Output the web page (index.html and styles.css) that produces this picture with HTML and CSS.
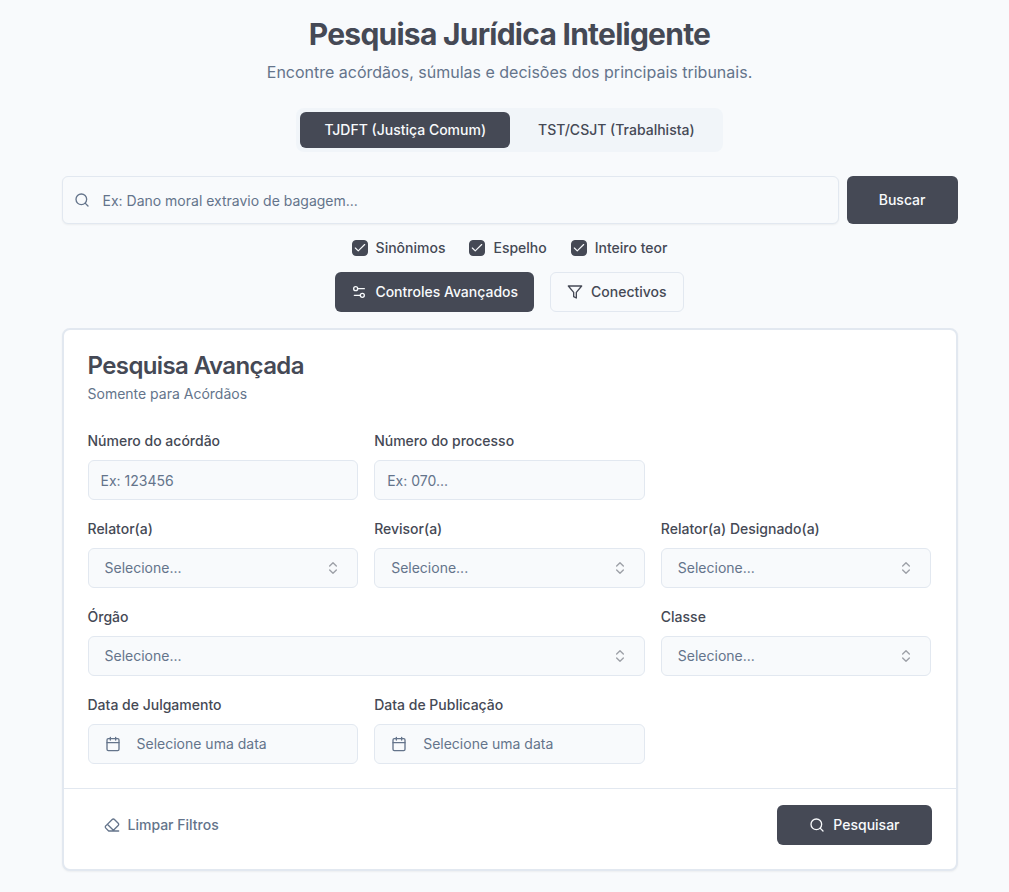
FILE: index.html
```html
<!DOCTYPE html>
<html lang="pt-BR">
<head>
<meta charset="utf-8">
<meta name="viewport" content="width=device-width, initial-scale=1">
<title>Pesquisa Jurídica Inteligente</title>
<link rel="stylesheet" href="styles.css">
</head>
<body>
<svg class="sprite" aria-hidden="true">
  <symbol id="search" viewBox="0 0 24 24"><circle cx="11" cy="11" r="8"/><path d="m21 21-4.3-4.3"/></symbol>
  <symbol id="check" viewBox="0 0 24 24"><path d="M20 6 9 17l-5-5"/></symbol>
  <symbol id="sliders" viewBox="0 0 24 24"><path d="M20 7h-9M14 17H5"/><circle cx="17" cy="17" r="3"/><circle cx="7" cy="7" r="3"/></symbol>
  <symbol id="funnel" viewBox="0 0 24 24"><path d="M22 3H2l8 9.46V19l4 2v-8.54L22 3Z"/></symbol>
  <symbol id="chevrons" viewBox="0 0 24 24"><path d="m7 15 5 5 5-5M7 9l5-5 5 5"/></symbol>
  <symbol id="calendar" viewBox="0 0 24 24"><path d="M8 2v4M16 2v4M3 10h18"/><rect x="3" y="4" width="18" height="18" rx="2"/></symbol>
  <symbol id="eraser" viewBox="0 0 24 24"><path d="m7 21-4.3-4.3c-1-1-1-2.5 0-3.4l9.6-9.6c1-1 2.5-1 3.4 0l5.6 5.6c1 1 1 2.5 0 3.4L13 21M22 21H7M5 11l9 9"/></symbol>
</svg>
<main class="page">
  <header class="hero">
    <h1 class="hero-title">Pesquisa Jurídica Inteligente</h1>
    <p class="hero-text">Encontre acórdãos, súmulas e decisões dos principais tribunais.</p>
  </header>

  <div class="tabs" role="tablist">
    <button class="tab tab-active" type="button" role="tab" aria-selected="true">TJDFT (Justiça Comum)</button>
    <button class="tab" type="button" role="tab" aria-selected="false">TST/CSJT (Trabalhista)</button>
  </div>

  <form class="search">
    <div class="search-row">
      <div class="stack search-field">
        <input class="search-input" type="text" aria-label="Pesquisa" placeholder="Ex: Dano moral extravio de bagagem...">
        <svg class="icon search-icon"><use href="#search"/></svg>
      </div>
      <button class="button button-dark button-large" type="submit">Buscar</button>
    </div>
    <div class="options">
      <label class="option"><span class="stack"><input class="checkbox" type="checkbox" checked><svg class="icon tick"><use href="#check"/></svg></span>Sinônimos</label>
      <label class="option"><span class="stack"><input class="checkbox" type="checkbox" checked><svg class="icon tick"><use href="#check"/></svg></span>Espelho</label>
      <label class="option"><span class="stack"><input class="checkbox" type="checkbox" checked><svg class="icon tick"><use href="#check"/></svg></span>Inteiro teor</label>
    </div>
    <div class="toggles">
      <button class="button button-dark" type="button"><svg class="icon"><use href="#sliders"/></svg>Controles Avançados</button>
      <button class="button button-outline" type="button"><svg class="icon"><use href="#funnel"/></svg>Conectivos</button>
    </div>
  </form>

  <form class="card">
    <div class="card-header">
      <h2 class="card-title">Pesquisa Avançada</h2>
      <p class="card-text">Somente para Acórdãos</p>
    </div>
    <div class="fields">
      <div class="field">
        <label class="label" for="acordao">Número do acórdão</label>
        <input class="control" id="acordao" type="text" placeholder="Ex: 123456">
      </div>
      <div class="field">
        <label class="label" for="processo">Número do processo</label>
        <input class="control" id="processo" type="text" placeholder="Ex: 070...">
      </div>
      <div class="field first">
        <label class="label" for="relator">Relator(a)</label>
        <div class="stack"><select class="control select" id="relator"><option>Selecione...</option></select><svg class="icon chevrons"><use href="#chevrons"/></svg></div>
      </div>
      <div class="field">
        <label class="label" for="revisor">Revisor(a)</label>
        <div class="stack"><select class="control select" id="revisor"><option>Selecione...</option></select><svg class="icon chevrons"><use href="#chevrons"/></svg></div>
      </div>
      <div class="field">
        <label class="label" for="designado">Relator(a) Designado(a)</label>
        <div class="stack"><select class="control select" id="designado"><option>Selecione...</option></select><svg class="icon chevrons"><use href="#chevrons"/></svg></div>
      </div>
      <div class="field wide">
        <label class="label" for="orgao">Órgão</label>
        <div class="stack"><select class="control select" id="orgao"><option>Selecione...</option></select><svg class="icon chevrons"><use href="#chevrons"/></svg></div>
      </div>
      <div class="field">
        <label class="label" for="classe">Classe</label>
        <div class="stack"><select class="control select" id="classe"><option>Selecione...</option></select><svg class="icon chevrons"><use href="#chevrons"/></svg></div>
      </div>
      <div class="field">
        <label class="label" for="julgamento">Data de Julgamento</label>
        <button class="control date" id="julgamento" type="button"><svg class="icon"><use href="#calendar"/></svg>Selecione uma data</button>
      </div>
      <div class="field">
        <label class="label" for="publicacao">Data de Publicação</label>
        <button class="control date" id="publicacao" type="button"><svg class="icon"><use href="#calendar"/></svg>Selecione uma data</button>
      </div>
    </div>
    <div class="card-footer">
      <button class="button button-ghost" type="reset"><svg class="icon"><use href="#eraser"/></svg>Limpar Filtros</button>
      <button class="button button-dark button-wide" type="submit"><svg class="icon"><use href="#search"/></svg>Pesquisar</button>
    </div>
  </form>
</main>
</body>
</html>
```

FILE: styles.css
```css
:root {
  --ink: #454955;
  --muted: #64748b;
  --border: #e2e8f0;
  --surface: #f8fafc;
}

*, *::before, *::after { box-sizing: border-box; }

body {
  margin: 0;
  padding: 16px 0 16px 10px;
  background: var(--surface);
  color: var(--ink);
  font: 14px/20px Inter, "Liberation Sans", sans-serif;
}

h1, h2, p { margin: 0; }

button, input, select {
  margin: 0;
  font: inherit;
  color: inherit;
}

.sprite { display: none; }

.icon {
  width: 16px;
  height: 16px;
  flex: none;
  fill: none;
  stroke: currentColor;
  stroke-width: 2;
  stroke-linecap: round;
  stroke-linejoin: round;
}

/* Children share one cell, so an icon can sit over its control. */
.stack {
  display: grid;
  align-items: center;
}

.stack > * { grid-area: 1 / 1; }
.stack > .icon { pointer-events: none; }

.page {
  max-width: 896px;
  margin: 0 auto;
  display: flex;
  flex-direction: column;
}

.hero { text-align: center; }

.hero-title {
  font-size: 30px;
  line-height: 36px;
  font-weight: 700;
  letter-spacing: -0.025em;
}

.hero-text {
  margin-top: 8px;
  font-size: 16px;
  line-height: 24px;
  color: var(--muted);
}

.tabs {
  align-self: center;
  display: flex;
  gap: 4px;
  margin-top: 24px;
  padding: 4px;
  border-radius: 8px;
  background: #f1f5f9;
}

.tab {
  height: 36px;
  padding: 0 24px;
  border: 0;
  border-radius: 6px;
  background: transparent;
  font-weight: 500;
}

.tab-active {
  background: var(--ink);
  color: var(--surface);
}

.search {
  display: flex;
  flex-direction: column;
  gap: 16px;
  margin-top: 24px;
}

.search-row {
  display: flex;
  gap: 8px;
}

.search-field { flex: 1; }

.search-input {
  width: 100%;
  height: 48px;
  padding: 0 12px 0 40px;
  border: 1px solid var(--border);
  border-radius: 6px;
  background: var(--surface);
  box-shadow: 0 1px 2px rgb(0 0 0 / 5%);
}

::placeholder {
  color: var(--muted);
  opacity: 1;
}

.search-icon {
  margin-left: 12px;
  color: var(--muted);
}

.button {
  height: 40px;
  display: inline-flex;
  align-items: center;
  justify-content: center;
  gap: 8px;
  padding: 0 16px;
  border: 0;
  border-radius: 6px;
  font-weight: 500;
  white-space: nowrap;
}

.button-dark {
  background: var(--ink);
  color: var(--surface);
}

.button-outline {
  border: 1px solid var(--border);
  background: var(--surface);
}

.button-ghost {
  background: transparent;
  color: var(--muted);
}

.button-large {
  height: 48px;
  padding: 0 32px;
}

.button-wide { padding: 0 32px; }

.options {
  display: flex;
  justify-content: center;
  gap: 24px;
}

.option {
  display: flex;
  align-items: center;
  gap: 8px;
  line-height: 16px;
  font-weight: 500;
}

.checkbox {
  appearance: none;
  width: 16px;
  height: 16px;
  border: 1px solid var(--ink);
  border-radius: 4px;
}

.checkbox:checked { background: var(--ink); }
.tick { color: var(--surface); padding: 1px; }

.toggles {
  display: flex;
  justify-content: center;
  gap: 16px;
}

.card {
  margin-top: 16px;
  border: 2px solid var(--border);
  border-radius: 8px;
  background: #fff;
  box-shadow: 0 1px 2px rgb(0 0 0 / 5%);
}

.card-header {
  display: flex;
  flex-direction: column;
  gap: 6px;
  padding: 24px;
}

.card-title {
  font-size: 24px;
  line-height: 24px;
  font-weight: 600;
  letter-spacing: -0.025em;
}

.card-text { color: var(--muted); }

.fields {
  display: grid;
  grid-template-columns: repeat(3, minmax(0, 1fr));
  gap: 16px;
  padding: 0 24px 24px;
}

.field {
  display: flex;
  flex-direction: column;
  gap: 6px;
}

.first { grid-column-start: 1; }
.wide { grid-column: span 2; }

.label {
  line-height: 26px;
  font-weight: 500;
}

.control {
  width: 100%;
  height: 40px;
  padding: 0 12px;
  border: 1px solid var(--border);
  border-radius: 6px;
  background: var(--surface);
}

.select {
  appearance: none;
  padding: 0 40px 0 16px;
  color: var(--muted);
}

.chevrons {
  justify-self: end;
  margin-right: 17px;
  opacity: 0.5;
}

.date {
  display: flex;
  align-items: center;
  gap: 16px;
  padding: 0 16px;
  color: var(--muted);
}

.card-footer {
  display: flex;
  align-items: center;
  justify-content: space-between;
  padding: 16px 24px 24px;
  border-top: 1px solid var(--border);
}
```
